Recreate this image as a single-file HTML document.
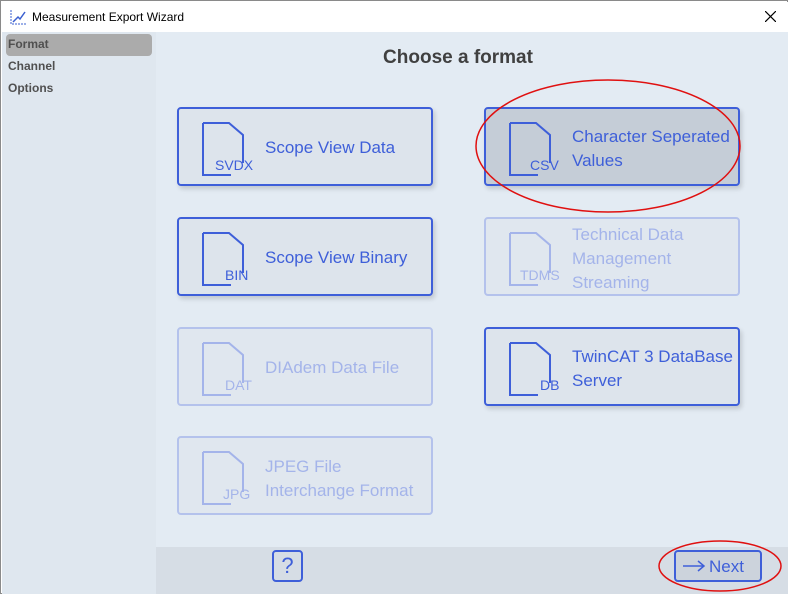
<!DOCTYPE html><html><head><style>
*{margin:0;padding:0;box-sizing:border-box}
body{width:788px;height:594px;overflow:hidden;font-family:"Liberation Sans",sans-serif;background:#fff;position:relative}
.win{position:absolute;left:0;top:0;width:788px;height:594px;border:1px solid #8a8a8a}
.title{position:absolute;left:1px;top:1px;width:786px;height:30px;background:#fff;font-size:12px;color:#000}
.side{position:absolute;left:1px;top:31px;width:154px;height:562px;background:#dfe7ef}
.main{position:absolute;left:155px;top:31px;width:632px;height:562px;background:#e3ebf3}
.nav{position:absolute;left:4px;width:146px;height:22px;font-size:12px;font-weight:bold;color:#505050;padding:3px 2px}
.card{position:absolute;width:256px;height:79px;border:2px solid #3e5fd9;border-radius:4px;background:#dde4ec;box-shadow:2px 3px 5px rgba(0,0,0,.15);color:#3e5fd9}
.card.dis{border-color:#b4c2ec;color:#a4b4ea;box-shadow:none;background:#e0e7ef}
.card.sel{background:#c5cdd7}
.doc{position:absolute;left:22px;top:12px;width:44px;height:55px}
.ext{position:absolute;top:48px;font-size:14px}
.lbl{position:absolute;left:86px;font-size:17px;line-height:24px}
</style></head><body>
<div class="win">
<div class="title">
<svg style="position:absolute;left:8px;top:7px" width="18" height="16" viewBox="0 0 18 16"><path d="M1 1V15H17" stroke="#3a5fd0" fill="none" stroke-width="1" stroke-dasharray="2 1"/><path d="M3 13L8 8L10 10L15 3" stroke="#3a5fd0" fill="none" stroke-width="1.5"/></svg>
<span style="position:absolute;left:30px;top:8px">Measurement Export Wizard</span>
<svg style="position:absolute;left:763px;top:9px" width="11" height="11" viewBox="0 0 11 11"><path d="M0 0L11 11M11 0L0 11" stroke="#000" stroke-width="1.2"/></svg>
</div>
<div class="side">
<div class="nav" style="top:2px;background:#ababab;border-radius:4px">Format</div>
<div class="nav" style="top:24px">Channel</div>
<div class="nav" style="top:46px">Options</div>
</div>
<div class="main">
<div style="position:absolute;left:-14px;width:632px;top:15px;text-align:center;font-size:19px;font-weight:bold;color:#404040">Choose a format</div>
<div style="position:absolute;left:0;top:515px;width:632px;height:47px;background:#d6dde5"></div>
</div>
</div>
<div class="card" style="left:177px;top:107px"><svg class="doc" viewBox="0 0 44 55"><path d="M2 2H28L42 14V42M30 54H2V2" stroke="currentColor" stroke-width="2" fill="none"/></svg><span class="ext" style="left:36px">SVDX</span><span class="lbl" style="top:27px">Scope View Data</span></div>
<div class="card sel" style="left:484px;top:107px"><svg class="doc" viewBox="0 0 44 55"><path d="M2 2H28L42 14V42M30 54H2V2" stroke="currentColor" stroke-width="2" fill="none"/></svg><span class="ext" style="left:44px">CSV</span><span class="lbl" style="top:16px">Character Seperated<br>Values</span></div>
<div class="card" style="left:177px;top:217px"><svg class="doc" viewBox="0 0 44 55"><path d="M2 2H28L42 14V42M30 54H2V2" stroke="currentColor" stroke-width="2" fill="none"/></svg><span class="ext" style="left:46px">BIN</span><span class="lbl" style="top:27px">Scope View Binary</span></div>
<div class="card dis" style="left:484px;top:217px"><svg class="doc" viewBox="0 0 44 55"><path d="M2 2H28L42 14V42M30 54H2V2" stroke="currentColor" stroke-width="2" fill="none"/></svg><span class="ext" style="left:34px">TDMS</span><span class="lbl" style="top:4px">Technical Data<br>Management<br>Streaming</span></div>
<div class="card dis" style="left:177px;top:327px"><svg class="doc" viewBox="0 0 44 55"><path d="M2 2H28L42 14V42M30 54H2V2" stroke="currentColor" stroke-width="2" fill="none"/></svg><span class="ext" style="left:46px">DAT</span><span class="lbl" style="top:27px">DIAdem Data File</span></div>
<div class="card" style="left:484px;top:327px"><svg class="doc" viewBox="0 0 44 55"><path d="M2 2H28L42 14V42M30 54H2V2" stroke="currentColor" stroke-width="2" fill="none"/></svg><span class="ext" style="left:54px">DB</span><span class="lbl" style="top:16px">TwinCAT 3 DataBase<br>Server</span></div>
<div class="card dis" style="left:177px;top:436px"><svg class="doc" viewBox="0 0 44 55"><path d="M2 2H28L42 14V42M30 54H2V2" stroke="currentColor" stroke-width="2" fill="none"/></svg><span class="ext" style="left:44px">JPG</span><span class="lbl" style="top:17px">JPEG File<br>Interchange Format</span></div>
<div style="position:absolute;left:272px;top:550px;width:31px;height:32px;border:2px solid #3e5fd9;border-radius:4px;color:#3e5fd9;font-size:22px;text-align:center;line-height:28px">?</div>
<div style="position:absolute;left:674px;top:550px;width:88px;height:32px;border:2px solid #3e5fd9;border-radius:4px;color:#3e5fd9;font-size:17px;line-height:28px;background:#ccd3dc">
<svg style="position:absolute;left:6px;top:8px" width="24" height="12" viewBox="0 0 24 12"><path d="M1 6H22M16 1L22 6L16 11" stroke="#3e5fd9" stroke-width="1.5" fill="none"/></svg>
<span style="position:absolute;left:33px;top:1px">Next</span></div>
<svg style="position:absolute;left:0;top:0" width="788" height="594"><ellipse cx="608" cy="146" rx="132" ry="66" fill="none" stroke="#e01010" stroke-width="1.5"/><ellipse cx="720" cy="566" rx="61" ry="25" fill="none" stroke="#e01010" stroke-width="1.5"/></svg>
</body></html>
